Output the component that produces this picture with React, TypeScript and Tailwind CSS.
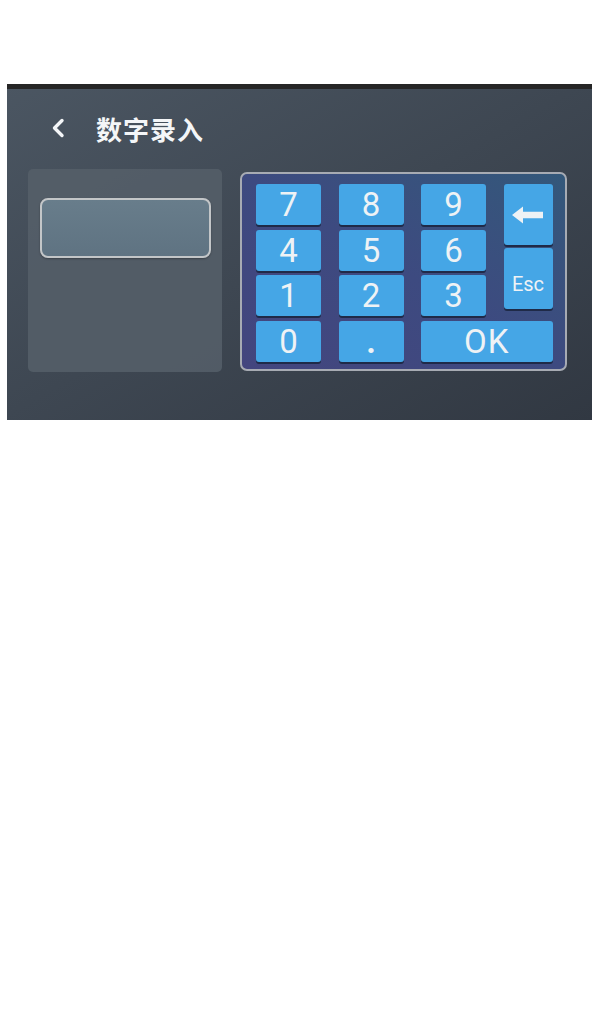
import React from 'react';

const keyCls =
  'flex items-center justify-center rounded-[3px] bg-[#45a6e6] text-[#eef2f5] shadow-[0_2px_0_#1f2a48] font-["Roboto",sans-serif]';

function Key({ label, className = '' }: { label: React.ReactNode; className?: string }) {
  return <div className={`${keyCls} ${className}`}>{label}</div>;
}

export default function App() {
  const digits = ['7', '8', '9', '4', '5', '6', '1', '2', '3'];

  return (
    <div className="w-[600px] h-[1024px] bg-white pt-[84px] pl-[7px]">
      <div className="w-[585px] h-[336px] flex flex-col bg-gradient-to-br from-[#4b5662] to-[#313842]">
        <div className="h-[5px] bg-[#262626]" />

        {/* header */}
        <div className="flex items-center h-[80px] pl-[42px] pb-[2px]">
          <svg width="18" height="24" viewBox="0 0 18 24">
            <path d="M13 4.5 L5.5 12 L13 19.5" fill="none" stroke="#f4f6f8" strokeWidth="3.4" strokeLinecap="round" strokeLinejoin="round" />
          </svg>
          <span className='ml-[29px] text-[26px] font-bold text-[#f4f6f8] tracking-[1px] font-["Noto_Sans_CJK_SC","Noto_Sans",sans-serif]'>
            数字录入
          </span>
        </div>

        <div className="flex items-start pl-[21px] gap-[18px]">
          {/* display card */}
          <div className="w-[194px] h-[203px] rounded-[5px] bg-[#545e68]/90 pt-[29px] pl-[12px]">
            <div className="w-[171px] h-[60px] rounded-[8px] border-2 border-[#c3c6c8] bg-gradient-to-b from-[#687d8b] to-[#5f7382] shadow-[0_1px_2px_rgba(0,0,0,0.3)]" />
          </div>

          {/* keypad */}
          <div className="mt-[3px] w-[327px] h-[199px] rounded-[7px] border-2 border-[#a7abb3] bg-gradient-to-bl from-[#33587a] via-[#3d4a80] to-[#43457e] pl-[14px] pt-[10px]">
            <div className="grid grid-cols-[65px_65px_65px_49px] grid-rows-[41px_41px_41px_41px] gap-x-[17.5px] gap-y-[4.7px]">
              {digits.map((d, i) => (
                <Key
                  key={d}
                  label={d}
                  className={`text-[33px] leading-none ${i % 3 === 0 ? 'col-start-1' : ''}`}
                />
              ))}
              <div className="col-start-4 row-start-1 row-span-3 flex flex-col gap-[3px]">
                <Key
                  className="h-[61px]"
                  label={
                    <svg width="32" height="18" viewBox="0 0 32 18">
                      <path d="M0 9 L11 0.5 L11 5.8 L31 5.8 L31 12.2 L11 12.2 L11 17.5 Z" fill="#eef2f5" />
                    </svg>
                  }
                />
                <Key className="h-[61px] text-[20px] pt-[10px]" label="Esc" />
              </div>
              <Key label="0" className="row-start-4 col-start-1 text-[33px] leading-none" />
              <Key label="." className="row-start-4 col-start-2 text-[33px] leading-none font-bold" />
              <Key label="OK" className="row-start-4 col-start-3 col-span-2 text-[33px] leading-none tracking-[1px]" />
            </div>
          </div>
        </div>
      </div>
    </div>
  );
}
